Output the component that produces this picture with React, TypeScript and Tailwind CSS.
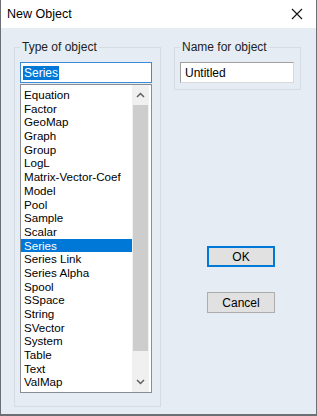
const TYPES = [
  "Equation",
  "Factor",
  "GeoMap",
  "Graph",
  "Group",
  "LogL",
  "Matrix-Vector-Coef",
  "Model",
  "Pool",
  "Sample",
  "Scalar",
  "Series",
  "Series Link",
  "Series Alpha",
  "Spool",
  "SSpace",
  "String",
  "SVector",
  "System",
  "Table",
  "Text",
  "ValMap",
];

const ui = { fontFamily: '"Liberation Sans", Arial, sans-serif' };

const App = () => {
  const selected = "Series";

  return (
    <div
      className="w-[317px] h-[416px] bg-[#e6ecf3] border-x border-b-2 border-[#6b6e73] flex flex-col text-black"
      style={ui}
    >
      {/* TITLE BAR */}
      <div className="h-[28px] bg-white flex items-center justify-between pl-[6px] pr-[13px] shrink-0">
        <span className="text-[12.5px]">New Object</span>
        <svg width="12" height="12" viewBox="0 0 12 12">
          <path d="M1 1 L11 11 M11 1 L1 11" stroke="#111" strokeWidth="1.1" />
        </svg>
      </div>

      {/* BODY */}
      <div className="flex pl-[13px] pt-[12px]">
        {/* LEFT GROUP */}
        <fieldset className="w-[147px] h-[367px] border border-[#d6dce4] pl-[5px] pt-[8px]">
          <legend className="text-[12px] px-[2px] leading-[14px] text-[#222]">
            Type of object
          </legend>

          <div className="w-[132px] h-[21px] bg-white border border-[#3c8ad8] flex items-center pl-[2px] text-[12px]">
            <span className="bg-[#0078d7] text-white leading-[14px] px-[1px]">
              {selected}
            </span>
          </div>

          <div className="w-[132px] h-[309px] mt-[1px] bg-white border border-[#8a8e94] flex text-[11.6px]">
            <div className="flex-1 pt-[3px]">
              {TYPES.map((t) => (
                <div
                  key={t}
                  className={
                    "h-[13.7px] leading-[13.7px] pl-[3px] whitespace-nowrap " +
                    (t === selected ? "bg-[#0078d7] text-white" : "")
                  }
                >
                  {t}
                </div>
              ))}
            </div>

            {/* SCROLLBAR */}
            <div className="w-[17px] mr-[2px] bg-[#f0f0f0] flex flex-col">
              <div className="h-[20px] flex items-center justify-center">
                <svg width="9" height="6" viewBox="0 0 9 6">
                  <path d="M1 5 L4.5 1.5 L8 5" fill="none" stroke="#606060" strokeWidth="1.5" />
                </svg>
              </div>
              <div className="h-[246px] bg-[#cdcdcd] mx-[1px]" />
              <div className="flex-1" />
              <div className="h-[20px] flex items-center justify-center">
                <svg width="9" height="6" viewBox="0 0 9 6">
                  <path d="M1 1 L4.5 4.5 L8 1" fill="none" stroke="#606060" strokeWidth="1.5" />
                </svg>
              </div>
            </div>
          </div>
        </fieldset>

        {/* RIGHT COLUMN */}
        <div className="ml-[13px] flex flex-col">
          <fieldset className="w-[127px] h-[50px] border border-[#d6dce4] pl-[5px] pt-[8px]">
            <legend className="text-[12px] px-[2px] leading-[14px] text-[#222]">
              Name for object
            </legend>
            <div className="w-[114px] h-[21px] bg-white border border-[#d9d9d9] border-t-[#a0a0a0] border-l-[#a0a0a0] flex items-center pl-[4px] text-[12px]">
              Untitled
            </div>
          </fieldset>

          <div className="ml-[33px] mt-[156px] flex flex-col gap-[25px]">
            <button className="w-[68px] h-[21px] bg-[#e1e1e1] border-2 border-[#0078d7] text-[12px]">
              OK
            </button>
            <button className="w-[68px] h-[21px] bg-[#e1e1e1] border border-[#adadad] text-[12px]">
              Cancel
            </button>
          </div>
        </div>
      </div>
    </div>
  );
};

export default App;
